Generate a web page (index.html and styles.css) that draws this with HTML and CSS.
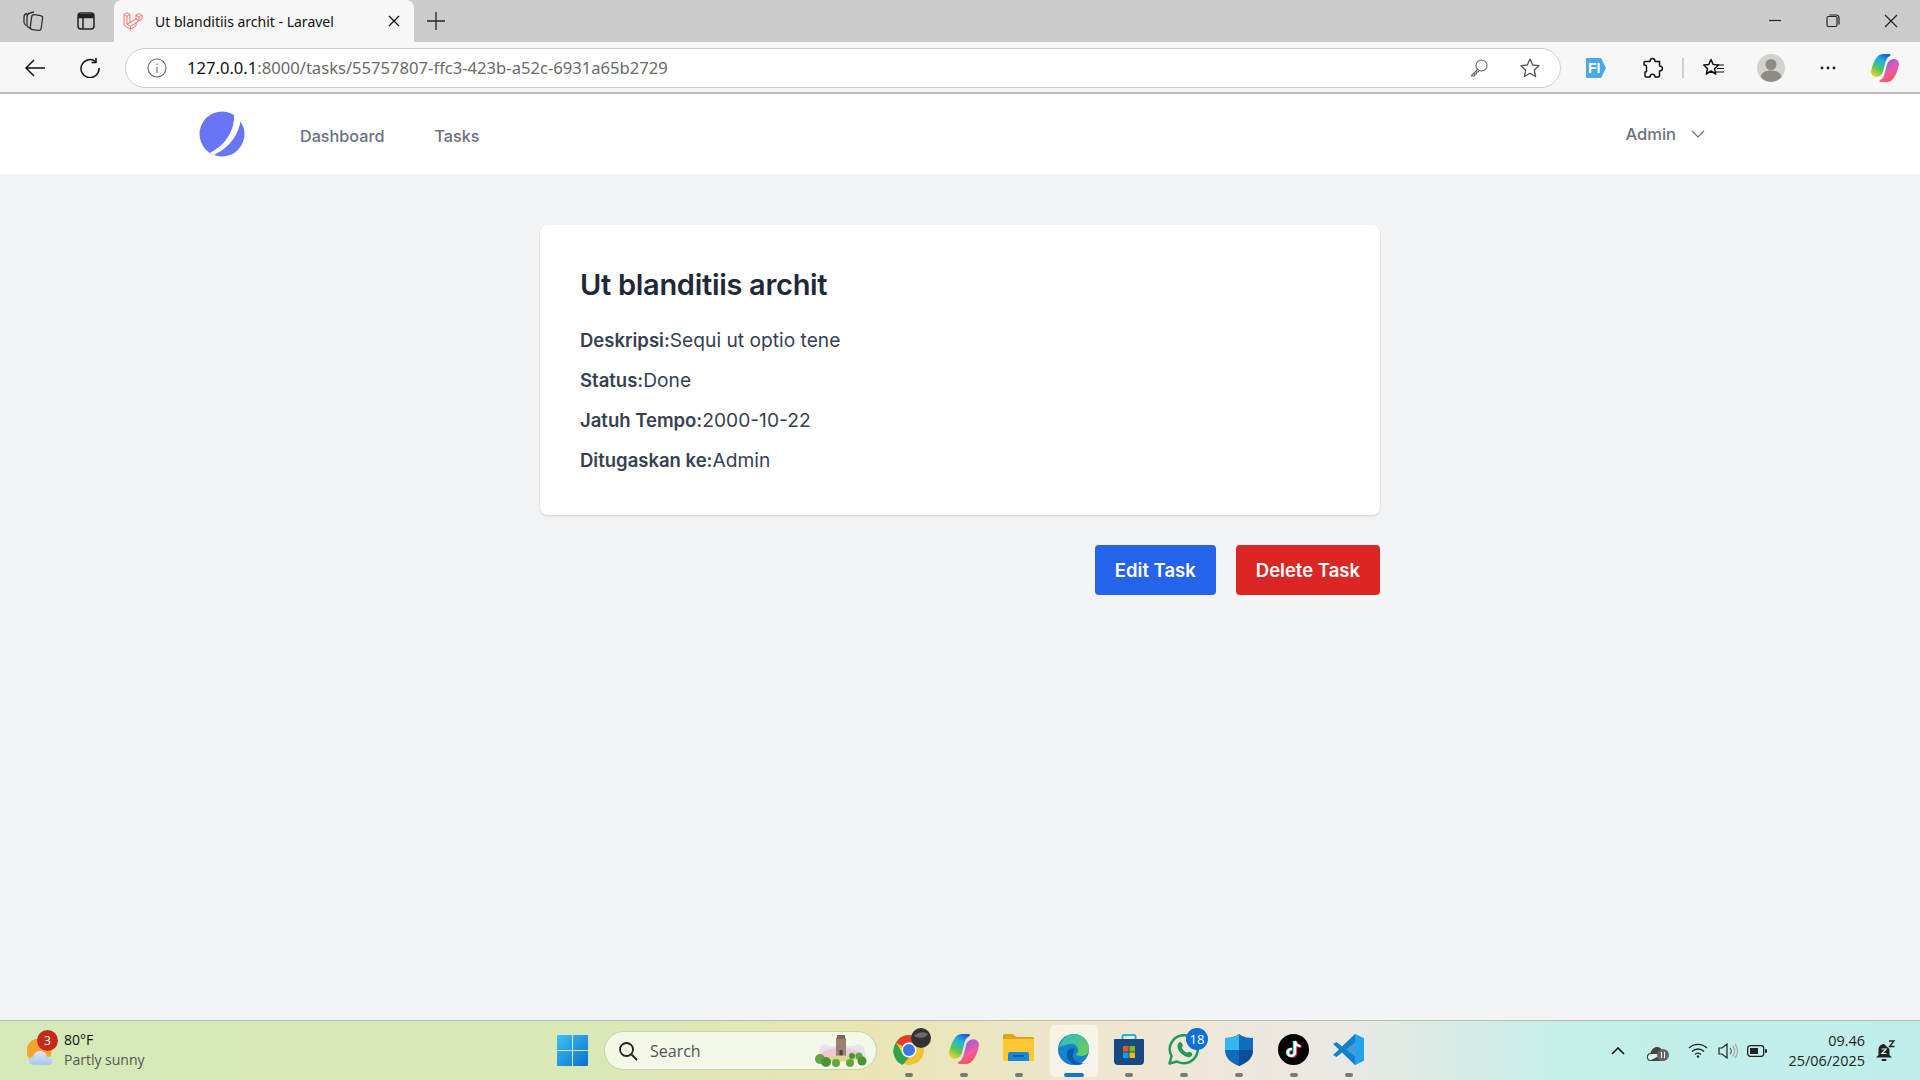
FILE: index.html
```html
<!DOCTYPE html>
<html lang="en">

<head>
    <meta charset="UTF-8">
    <meta name="viewport" content="width=device-width, initial-scale=1.0">
    <title>Ut blanditiis archit - Laravel</title>
    <link rel="stylesheet" href="styles.css">
</head>

<body>
    <!-- Browser tab strip -->
    <div class="tabstrip">
        <div class="strip-btn first">
            <svg width="22" height="22" viewBox="0 0 22 22" fill="none" stroke="#333" stroke-width="1.3"><rect x="9" y="5" width="11" height="15" rx="2.5" transform="rotate(8 14 12)"/><path d="M8 18c-2-.5-3-1.500-3-3V7c0-2 1-3.500 3-4l4-1"/><path d="M4 15.500C2.500 14.500 2 13.500 2 12V7c0-2 1-3 3-3.500"/></svg>
        </div>
        <div class="strip-btn">
            <svg width="20" height="20" viewBox="0 0 20 20" fill="none" stroke="#222" stroke-width="1.500"><rect x="2" y="2" width="16" height="16" rx="3"/><path d="M2 6.500h16M7 6.500V18"/><path d="M3 3h14v3H3z" fill="#222" stroke="none"/></svg>
        </div>
        <div class="tab">
            <svg class="favicon" width="20" height="20" viewBox="0 0 20 20" fill="none" stroke="#f8685f" stroke-width=".9" stroke-linejoin="round"><path d="M1 3.500 4 1.700 7 3.500V11.500L13 8V4.200L16 2.500 19 4.200V8L13 11.500V15L7.500 18.200 1 14.500ZM1 3.500 4 5.300 7 3.500M4 5.300V13.200L7.500 15.200 13 12M4 13.200 7 11.500M13 4.200 16 6 19 4.200M16 6V9.700M7.500 15.200V18.200M13 8 16 9.700"/></svg>
            <span class="tab-title">Ut blanditiis archit - Laravel</span>
            <svg class="tab-close" width="12" height="12" viewBox="0 0 12 12" stroke="#111" stroke-width="1.300"><path d="M1 1l10 10M11 1L1 11"/></svg>
        </div>
        <svg class="new-tab" width="18" height="18" viewBox="0 0 18 18" stroke="#222" stroke-width="1.300"><path d="M9 0v18M0 9h18"/></svg>
        <div class="window-controls">
            <svg width="58" height="14" viewBox="0 0 58 14" stroke="#222" stroke-width="1.200"><path d="M23 6.500h12"/></svg>
            <svg width="58" height="14" viewBox="0 0 58 14" fill="none" stroke="#222" stroke-width="1.200"><rect x="23" y="2.500" width="10" height="10" rx="1.500"/><path d="M25.500 1h6.500c2 0 3 1 3 3v6.500"/></svg>
            <svg width="58" height="14" viewBox="0 0 58 14" stroke="#222" stroke-width="1.200"><path d="M23 1l12 12M35 1L23 13"/></svg>
        </div>
    </div>

    <!-- Browser toolbar -->
    <div class="toolbar">
        <svg class="nav-back" width="20" height="18" viewBox="0 0 20 18" fill="none" stroke="#111" stroke-width="1.500"><path d="M20 9H1M9 1L1 9l8 8"/></svg>
        <svg class="nav-reload" width="20" height="20" viewBox="0 0 20 20" fill="none" stroke="#111" stroke-width="1.500"><path d="M15.500 3.500A9 9 0 1 0 19 10"/><path d="M16 0v4.500h-4.500"/></svg>
        <div class="omnibox">
            <svg class="info-icon" width="20" height="20" viewBox="0 0 20 20" fill="none" stroke="#666" stroke-width="1.100"><circle cx="10" cy="10" r="9"/><path d="M10 9v6M10 5.500v1.500"/></svg>
            <span class="url"><span class="url-host">127.0.0.1</span>:8000/tasks/55757807-ffc3-423b-a52c-6931a65b2729</span>
            <svg class="omni-key" width="18" height="18" viewBox="0 0 18 18" fill="none" stroke="#666" stroke-width="1.100"><circle cx="11.500" cy="6.500" r="5.500"/><path d="M7.500 10.500L1.500 16.500v0.500h3v-2h2v-2h1.500l1-1"/></svg>
            <svg class="omni-star" width="22" height="22" viewBox="0 0 22 22" fill="none" stroke="#555" stroke-width="1.300" stroke-linejoin="round"><path d="M11 2l2.700 6 6.300.700-4.700 4.300 1.300 6.500-5.600-3.300-5.600 3.300 1.300-6.500L2 8.700 8.300 8z"/></svg>
        </div>
        <div class="tool-btn">
            <svg width="22" height="22" viewBox="0 0 22 22"><path d="M2 1h14l5 10-5 10H2a1 1 0 0 1-1-1V2a1 1 0 0 1 1-1z" fill="#4aa8e8"/><text x="3" y="16" class="fi-text">FI</text></svg>
        </div>
        <div class="tool-btn">
            <svg width="20" height="22" viewBox="0 0 20 22" fill="none" stroke="#111" stroke-width="1.500" stroke-linejoin="round"><path d="M7 4.500C7 2.500 8 1.500 9.500 1.500S12 2.500 12 4.500h4.500V9c2 0 3 1 3 2.500S18.500 14 16.500 14v4.500q0 1-1 1.500H12c0-2-1-2.800-2.500-2.800S7 18 7 20H3a1.500 1.500 0 0 1-1-1.500V15c2 0 1.500 0 1.500-3.500S3.500 8 1 8V5.500c0-.5.500-1 1-1z"/></svg>
        </div>
        <div class="tool-divider"></div>
        <div class="tool-btn">
            <svg width="22" height="20" viewBox="0 0 22 20" fill="none" stroke="#111" stroke-width="1.500" stroke-linejoin="round"><path d="M8 1.500l2.200 5 5.300.5-4 3.700 1.200 5.300L8 13l-4.700 3 1.200-5.300L.8 7l5-.5z"/><path d="M15 7h6M14 10.500h7M13 14h8" stroke-width="1.200"/></svg>
        </div>
        <div class="tool-btn">
            <svg width="28" height="28" viewBox="0 0 28 28"><circle cx="14" cy="14" r="14" fill="#d3d1cd"/><circle cx="14" cy="10.500" r="5.500" fill="#8e8b87"/><path d="M3.500 23c1-4.500 5-6.500 10.500-6.500s9.500 2 10.500 6.500a14 14 0 0 1-21 0z" fill="#8e8b87"/></svg>
        </div>
        <div class="tool-btn">
            <svg width="16" height="4" viewBox="0 0 16 4" fill="#222"><circle cx="2" cy="2" r="1.400"/><circle cx="8" cy="2" r="1.400"/><circle cx="14" cy="2" r="1.400"/></svg>
        </div>
        <div class="tool-btn">
            <svg width="28" height="28" viewBox="0 0 28 28">
                <defs>
                    <linearGradient id="copA" x1=".7" y1="0" x2=".2" y2="1"><stop offset="0" stop-color="#1a5fd8"/><stop offset=".3" stop-color="#1fb2e0"/><stop offset=".65" stop-color="#55c85a"/><stop offset="1" stop-color="#f2d02e"/></linearGradient>
                    <linearGradient id="copB" x1=".3" y1="0" x2=".8" y2="1"><stop offset="0" stop-color="#f0572e"/><stop offset=".4" stop-color="#f05aa8"/><stop offset="1" stop-color="#8a5ce8"/></linearGradient>
                </defs>
                <path d="M12 0h6c2 0 2 1 1 2-3 1-4 4-5 8l-2 8c-1 3-4 5-7 5-3 0-5-3-5-5C1 11 4 5 7 2c1-1 3-2 5-2z" fill="url(#copA)"/>
                <path d="M12 0h6c2 0 2 1 1 2-3 1-4 4-5 8l-2 8c-1 3-4 5-7 5-3 0-5-3-5-5C1 11 4 5 7 2c1-1 3-2 5-2z" fill="url(#copB)" transform="rotate(180 14 14)"/>
            </svg>
        </div>
    </div>

    <!-- Laravel page -->
    <nav class="app-nav">
        <svg class="app-logo" width="46" height="46" viewBox="0 0 46 46"><circle cx="23" cy="23" r="22.500" fill="#6875f5"/><path d="M35 3C36 18 28 33 11 42L15 44C32 37 41 26 44 13L41 2z" fill="#fff"/><path d="M41.500 10.500C39 24 31 36 16 43.500 27 47 39 41 43.500 30 46 23 45 16 41.500 10.500z" fill="#6875f5"/></svg>
        <a class="nav-link link-dashboard">Dashboard</a>
        <a class="nav-link">Tasks</a>
        <div class="nav-user">
            <span>Admin</span>
            <svg width="14" height="8" viewBox="0 0 14 8" fill="none" stroke="#6b7280" stroke-width="1.200"><path d="M1 1l6 6 6-6"/></svg>
        </div>
    </nav>

    <main class="content">
        <section class="task-card">
            <h1>Ut blanditiis archit</h1>
            <p><strong>Deskripsi:</strong>Sequi ut optio tene</p>
            <p><strong>Status:</strong>Done</p>
            <p><strong>Jatuh Tempo:</strong>2000-10-22</p>
            <p><strong>Ditugaskan ke:</strong>Admin</p>
        </section>
        <div class="task-actions">
            <a class="btn btn-edit">Edit Task</a>
            <a class="btn btn-delete">Delete Task</a>
        </div>
    </main>

    <!-- Windows taskbar -->
    <footer class="taskbar">
        <div class="weather">
            <svg width="30" height="30" viewBox="0 0 30 30">
                <defs><linearGradient id="cloudG" x1="0" y1="0" x2="0" y2="1"><stop offset="0" stop-color="#d8e6f8"/><stop offset="1" stop-color="#a9c6ee"/></linearGradient></defs>
                <circle cx="12" cy="15" r="12.500" fill="#f4a32c"/>
                <path d="M7 29c-3 0-5-2-5-4.500S4 20.500 6 20.500C7 17 10 15 13 15c4 0 6.500 2.500 7 5.500 3 0 5.500 2 5.500 4.500S23 29 20 29z" fill="url(#cloudG)"/>
            </svg>
            <span class="weather-badge">3</span>
            <div class="weather-text">
                <span class="temp">80°F</span>
                <span class="sky">Partly sunny</span>
            </div>
        </div>
        <svg class="start" width="31" height="31" viewBox="0 0 31 31"><defs><linearGradient id="win" x1="0" y1="0" x2="1" y2="1"><stop offset="0" stop-color="#3ec2f5"/><stop offset="1" stop-color="#0a6fd0"/></linearGradient></defs><path d="M0 1a1 1 0 0 1 1-1h14v15H0zM16 0h14a1 1 0 0 1 1 1v14H16zM0 16h15v15H1a1 1 0 0 1-1-1zM16 16h15v14a1 1 0 0 1-1 1H16z" fill="url(#win)"/></svg>
        <div class="searchbox">
            <svg width="20" height="20" viewBox="0 0 20 20" fill="none" stroke="#222" stroke-width="1.800"><circle cx="8.500" cy="8.500" r="6.500"/><path d="M13.500 13.500L19 19"/></svg>
            <span>Search</span>
            <svg class="search-art" width="58" height="32" viewBox="0 0 58 32">
                <path d="M8 12c2-3 6-3 8-1h26c3-3 8-2 10 1l2 10H6z" fill="#e6e4f0"/>
                <path d="M6 24c3-8 10-11 22-11s22 3 25 11z" fill="#f0c8d4"/>
                <rect x="24" y="3" width="10" height="19" fill="#9a7f72"/>
                <rect x="25" y="0" width="8" height="4" fill="#7d655a"/>
                <rect x="27.500" y="15" width="3" height="7" fill="#4f3f38"/>
                <path d="M10 24c6-4 30-5 38 0-6 3-32 4-38 0z" fill="#dcd98c"/>
                <circle cx="8" cy="24" r="5" fill="#5fa743"/><circle cx="14" cy="27" r="5" fill="#4a9438"/><circle cx="24" cy="28" r="4" fill="#5fa743"/>
                <circle cx="40" cy="21" r="3" fill="#4a9438"/><circle cx="47" cy="21" r="3.500" fill="#5fa743"/><circle cx="38" cy="28" r="4" fill="#5fa743"/><circle cx="50" cy="26" r="4.500" fill="#4a9438"/>
            </svg>
        </div>
        <div class="dock">
            <div class="dock-item">
                <svg width="32" height="32" viewBox="0 0 32 32"><circle cx="16" cy="16" r="15" fill="#f1c232"/><path d="M16 1a15 15 0 0 1 13 7.500H16a7.500 7.500 0 0 0-6.500 3.800L3 8.500A15 15 0 0 1 16 1z" fill="#e33b2e"/><path d="M3 8.500l6.500 11.300a7.500 7.500 0 0 0 6.500 3.700L9.500 31A15 15 0 0 1 3 8.500z" fill="#2ea44f"/><circle cx="16" cy="16" r="7.500" fill="#fff"/><circle cx="16" cy="16" r="6" fill="#3b78e7"/></svg>
                <svg class="dock-avatar" width="20" height="20" viewBox="0 0 20 20"><circle cx="10" cy="10" r="10" fill="#333"/><path d="M3 8c4-4 10-5 14-2-2 4-8 5-14 2z" fill="#6b6b6b"/></svg>
                <i class="dock-dot"></i>
            </div>
            <div class="dock-item">
                <svg width="30" height="30" viewBox="0 0 28 28"><path d="M12 0h6c2 0 2 1 1 2-3 1-4 4-5 8l-2 8c-1 3-4 5-7 5-3 0-5-3-5-5C1 11 4 5 7 2c1-1 3-2 5-2z" fill="url(#copA)"/><path d="M12 0h6c2 0 2 1 1 2-3 1-4 4-5 8l-2 8c-1 3-4 5-7 5-3 0-5-3-5-5C1 11 4 5 7 2c1-1 3-2 5-2z" fill="url(#copB)" transform="rotate(180 14 14)"/></svg>
                <i class="dock-dot"></i>
            </div>
            <div class="dock-item">
                <svg width="31" height="27" viewBox="0 0 31 27"><path d="M0 2a2 2 0 0 1 2-2h8l3 3h17a1 1 0 0 1 1 1v3H0z" fill="#e0a31a"/><path d="M0 5h31v21a1 1 0 0 1-1 1H1a1 1 0 0 1-1-1z" fill="#fdc933"/><path d="M5 27v-7a2 2 0 0 1 2-2h17a2 2 0 0 1 2 2v7z" fill="#1a86d8"/><path d="M10 22h11" stroke="#0c4f8f" stroke-width="1.500"/></svg>
                <i class="dock-dot"></i>
            </div>
            <div class="dock-item dock-active">
                <svg width="31" height="31" viewBox="0 0 31 31"><defs><linearGradient id="edgeG" x1="0" y1="0" x2="1" y2="1"><stop offset="0" stop-color="#2fb5c9"/><stop offset="1" stop-color="#6fd24e"/></linearGradient></defs><circle cx="15.500" cy="15.500" r="15.500" fill="#1382cf"/><path d="M1 14C3 5 9 0 16 0c9 0 15 7 15 15 0 5-4 7-8 7-3 0-5-1-5-2 2-1 3-3 2-5-1-4-5-6-9-5-5 1-9 3-10 4z" fill="url(#edgeG)"/><path d="M17 15c-4-2-8 0-8 6 0 5 5 10 11 10 2 0 4-1 6-2-5 1-10-2-11-6-.5-3 1-6 2-8z" fill="#0c5aa6"/></svg>
                <i class="dock-dot"></i>
            </div>
            <div class="dock-item">
                <svg width="30" height="31" viewBox="0 0 30 31"><path d="M8.500 5V2a1.500 1.500 0 0 1 1.500-1h10a1.500 1.500 0 0 1 1.500 1v3" fill="none" stroke="#2aa9e0" stroke-width="2"/><path d="M0 6a1 1 0 0 1 1-1h28a1 1 0 0 1 1 1v21a4 4 0 0 1-4 4H4a4 4 0 0 1-4-4z" fill="#174a82"/><rect x="9" y="12" width="5.500" height="5.500" fill="#f25022"/><rect x="15.500" y="12" width="5.500" height="5.500" fill="#7fba00"/><rect x="9" y="18.500" width="5.500" height="5.500" fill="#00a4ef"/><rect x="15.500" y="18.500" width="5.500" height="5.500" fill="#ffb900"/></svg>
                <i class="dock-dot"></i>
            </div>
            <div class="dock-item">
                <svg width="31" height="31" viewBox="0 0 31 31" fill="none"><path d="M1.500 29.500l2-7.500A14 14 0 1 1 9 27.500z" stroke="#1f9a5a" stroke-width="2.500" stroke-linejoin="round"/><path d="M10.500 9c2-2 3-1 4 1.500 1 2-1 2.500-.5 3.500 1 2 2.500 3.500 4.500 4.500 1 .5 1.500-1.500 3.500-.5 2.500 1 3 2.500 1.500 4-2 2-5 1.500-9-1.500s-6.500-8-4-11.500z" fill="#1f9a5a"/></svg>
                <span class="dock-badge">18</span>
                <i class="dock-dot"></i>
            </div>
            <div class="dock-item">
                <svg width="28" height="32" viewBox="0 0 28 32"><path d="M14 0c4 3 9 4 14 4v12c0 8-6 13-14 16C6 29 0 24 0 16V4c5 0 10-1 14-4z" fill="#0f6cbd"/><path d="M14 0v16H0V4c5 0 10-1 14-4z" fill="#36b6ee"/><path d="M14 16h14c0 8-6 13-14 16z" fill="#0b4f96"/></svg>
                <i class="dock-dot"></i>
            </div>
            <div class="dock-item">
                <svg width="31" height="31" viewBox="0 0 31 31" fill="none"><circle cx="15.500" cy="15.500" r="15.500" fill="#000"/><path d="M17 7v11.500a3.500 3.500 0 1 1-3-3.500" stroke="#25f4ee" stroke-width="2.500" transform="translate(-1 0)"/><path d="M17 7c.5 3 2.500 5 5.500 5" stroke="#25f4ee" stroke-width="2.500" transform="translate(-1 0)"/><path d="M17 7v11.500a3.500 3.500 0 1 1-3-3.500" stroke="#fe2c55" stroke-width="2.500" transform="translate(1 0.500)"/><path d="M17 7c.5 3 2.500 5 5.500 5" stroke="#fe2c55" stroke-width="2.500" transform="translate(1 0.500)"/><path d="M17 7v11.500a3.500 3.500 0 1 1-3-3.500M17 7c.5 3 2.500 5 5.500 5" stroke="#fff" stroke-width="2.300"/></svg>
                <i class="dock-dot"></i>
            </div>
            <div class="dock-item">
                <svg width="31" height="31" viewBox="0 0 31 31"><path d="M22 0l9 4.500v22L22 31 9 18.500 3.500 23 0 21l6-5.500L0 10l3.500-2L9 12.500z" fill="#0f7fd0"/><path d="M22 8.500L13 15.500l9 7z" fill="#e8f3ec" opacity=".25"/><path d="M22 0l9 4.500v22L22 31z" fill="#25a4ec"/></svg>
                <i class="dock-dot"></i>
            </div>
        </div>
        <div class="tray">
            <svg class="tray-chevron" width="14" height="8" viewBox="0 0 14 8" fill="none" stroke="#111" stroke-width="1.600"><path d="M1 7l6-6 6 6"/></svg>
            <div class="tray-cloud">
                <svg width="20" height="14" viewBox="0 0 20 14"><path d="M4 14a4 4 0 0 1-.5-8C4.500 2.500 7 0 10 0c3 0 5.500 2 6 5a4.500 4.500 0 0 1-.5 9z" fill="#444"/><path d="M4 13a3 3 0 0 1 0-6h12" fill="#ddf3ee"/></svg>
                <span class="pause-dot"><i></i><i></i></span>
            </div>
            <svg class="tray-wifi" width="20" height="15" viewBox="0 0 20 15" fill="none" stroke="#222" stroke-width="1.300"><path d="M1 5a13 13 0 0 1 18 0M4 8.500a8.500 8.500 0 0 1 12 0M7 11.500a4 4 0 0 1 6 0"/><circle cx="10" cy="13.500" r="1.200" fill="#222" stroke="none"/></svg>
            <svg class="tray-volume" width="20" height="16" viewBox="0 0 20 16" fill="none" stroke="#222" stroke-width="1.200"><path d="M1 5v6h3l5 4V1L4 5z"/><path d="M12 5a4 4 0 0 1 0 6" stroke="#666"/><path d="M14.500 2.500a8 8 0 0 1 0 11M17 1a11 11 0 0 1 0 14" stroke="#aaa"/></svg>
            <svg class="tray-battery" width="20" height="12" viewBox="0 0 20 12"><rect x=".7" y=".7" width="16" height="10.600" rx="2.500" fill="none" stroke="#222" stroke-width="1.300"/><rect x="3" y="3" width="8" height="6" fill="#222"/><rect x="18" y="4" width="2" height="4" rx="1" fill="#222"/></svg>
            <div class="clock">
                <span>09.46</span>
                <span>25/06/2025</span>
            </div>
            <svg class="tray-bell" width="20" height="22" viewBox="0 0 20 22"><path d="M8 4C4 4.500 2.500 7 2.500 10v5L0 17.500h16L13.500 15V9" fill="#222"/><rect x="5.500" y="19" width="5" height="2" rx="1" fill="#222"/><path d="M5.500 9h4.500l-4 4.500h4.500" fill="none" stroke="#ddf3ee" stroke-width="1.200"/><path d="M13 1h5l-4.500 5.500h5" fill="none" stroke="#222" stroke-width="1.300"/></svg>
        </div>
    </footer>
</body>

</html>
```

FILE: styles.css
```css
* {
    box-sizing: border-box;
}

body {
    margin: 0;
    height: 100vh;
    display: flex;
    flex-direction: column;
    overflow: hidden;
    background-color: #f3f4f6;
    font-family: "Open Sans", "Noto Sans", sans-serif;
}

/* Tab strip */
.tabstrip {
    height: 42px;
    flex-shrink: 0;
    display: flex;
    align-items: center;
    background-color: #cccccc;
}

.strip-btn {
    width: 53px;
    display: flex;
    justify-content: center;
}

.strip-btn.first {
    margin-left: 6px;
}

.tab {
    width: 300px;
    height: 42px;
    margin-left: 2px;
    padding: 0 14px 0 9px;
    display: flex;
    align-items: center;
    background-color: #f7f7f7;
    border-radius: 8px 8px 0 0;
}

.tab-title {
    flex: 1;
    margin-left: 12px;
    font-size: 14px;
    color: #111;
    font-family: "Noto Sans", sans-serif;
}

.new-tab {
    margin-left: 13px;
}

.window-controls {
    margin-left: auto;
    display: flex;
}

/* Toolbar */
.toolbar {
    height: 52px;
    flex-shrink: 0;
    display: flex;
    align-items: center;
    padding-top: 1px;
    padding-right: 6px;
    background-color: #f7f7f7;
    border-bottom: 2px solid #bdbdbd;
}

.nav-back {
    margin-left: 25px;
}

.nav-reload {
    margin-left: 35px;
}

.omnibox {
    width: 1436px;
    height: 40px;
    margin-left: 25px;
    margin-right: 6px;
    padding: 0 19px 0 21px;
    display: flex;
    align-items: center;
    background-color: #fff;
    border: 1px solid #cfcfcf;
    border-radius: 20px;
}

.url {
    flex: 1;
    margin-left: 20px;
    font-size: 16.6px;
    color: #6a6a6a;
    font-family: "Noto Sans", sans-serif;
}

.url-host {
    color: #111;
}

.omni-key {
    margin-right: 31px;
}

.tool-btn {
    width: 57px;
    display: flex;
    justify-content: center;
    align-items: center;
}

.fi-text {
    font-family: "Liberation Sans", sans-serif;
    font-size: 14px;
    font-weight: 700;
    fill: #fff;
}

.tool-divider {
    width: 2px;
    height: 20px;
    margin: 0 1px;
    background-color: #cfcfcf;
}

/* App nav */
.app-nav {
    height: 80px;
    flex-shrink: 0;
    display: flex;
    align-items: center;
    padding-left: 199px;
    padding-right: 215px;
    background-color: #fff;
    font-family: Inter, sans-serif;
}

.app-logo {
    margin-top: -1px;
}

.nav-link {
    margin-left: 50px;
    font-size: 16.2px;
    font-weight: 500;
    color: #6b7280;
    padding-top: 4px;
}

.link-dashboard {
    margin-left: 55px;
}

.nav-user {
    margin-left: auto;
    display: flex;
    align-items: center;
    gap: 15px;
    font-size: 16.500px;
    font-weight: 500;
    color: #6b7280;
}

/* Task detail */
.content {
    flex: 1;
    width: 840px;
    margin: 0 auto;
    padding-top: 51px;
    font-family: Inter, sans-serif;
}

.task-card {
    height: 290px;
    padding: 42px 40px 40px;
    background-color: #fff;
    border-radius: 8px;
    box-shadow: 0 1px 3px rgba(0, 0, 0, 0.1), 0 1px 2px rgba(0, 0, 0, 0.06);
}

.task-card h1 {
    margin: 0 0 23px;
    font-size: 29px;
    line-height: 36px;
    font-weight: 600;
    letter-spacing: -0.3px;
    color: #1f2937;
}

.task-card p {
    height: 28px;
    margin: 0 0 12px;
    font-size: 19.2px;
    line-height: 28px;
    color: #374151;
}

.task-card strong {
    font-size: 18.500px;
    font-weight: 600;
}

.task-actions {
    margin-top: 30px;
    display: flex;
    justify-content: flex-end;
    gap: 20px;
}

.btn {
    height: 50px;
    padding: 0 20px;
    display: flex;
    align-items: center;
    border-radius: 4px;
    font-size: 18.500px;
    font-weight: 600;
    color: #fff;
}

.btn-edit {
    background-color: #2563eb;
}

.btn-delete {
    background-color: #dc2626;
}

/* Taskbar */
.taskbar {
    height: 60px;
    flex-shrink: 0;
    display: flex;
    align-items: center;
    background: linear-gradient(90deg, #d6e9b8 0%, #d9e8b6 30%, #e8e6b4 45%, #f0e6d6 60%, #eae9e4 70%, #c4efe9 82%, #bfeeea 100%);
    border-top: 1px solid #b5c0a8;
}

.weather {
    width: 557px;
    padding-left: 27px;
    display: flex;
    align-items: center;
    position: relative;
}

.weather-badge {
    position: absolute;
    left: 37px;
    top: -2px;
    width: 21px;
    height: 21px;
    display: flex;
    align-items: center;
    justify-content: center;
    border-radius: 50%;
    background-color: #c42b1c;
    color: #fff;
    font-size: 12px;
}

.weather-text {
    margin-left: 7px;
    margin-top: -2px;
    display: flex;
    flex-direction: column;
    font-size: 14px;
    line-height: 20px;
}

.temp {
    color: #111;
}

.sky {
    color: #555;
}

.start {
    flex-shrink: 0;
}

.searchbox {
    width: 273px;
    height: 39px;
    margin-left: 16px;
    padding: 0 6px 0 13px;
    display: flex;
    align-items: center;
    background-color: #f4f8e6;
    border: 1px solid #c9d0b0;
    border-radius: 20px;
    color: #555;
    font-size: 16px;
}

.searchbox span {
    flex: 1;
    margin-left: 12px;
}

.dock {
    margin-left: 4px;
    display: flex;
}

.dock-item {
    width: 55px;
    height: 52px;
    padding-top: 9px;
    display: flex;
    justify-content: center;
    align-items: flex-start;
    position: relative;
    border-radius: 5px;
}

.dock-active {
    width: 48px;
    margin: 0 3.5px;
    background-color: rgba(255, 255, 255, 0.55);
}

.dock-dot {
    position: absolute;
    left: 50%;
    bottom: 0;
    width: 8px;
    height: 4px;
    margin-left: -4px;
    border-radius: 2px;
    background-color: #7a7a72;
}

.dock-active .dock-dot {
    width: 20px;
    margin-left: -10px;
    background-color: #0f78d4;
}

.dock-avatar {
    position: absolute;
    top: 3px;
    left: 30px;
}

.dock-badge {
    position: absolute;
    top: 3px;
    left: 30px;
    width: 22px;
    height: 22px;
    display: flex;
    align-items: center;
    justify-content: center;
    border-radius: 50%;
    background-color: #0f6fd6;
    color: #fff;
    font-size: 13px;
}

.tray {
    flex: 1;
    display: flex;
    align-items: center;
    padding-left: 235px;
}

.tray-cloud {
    position: relative;
    width: 20px;
    height: 14px;
    margin-left: 22px;
}

.pause-dot {
    position: absolute;
    left: 10px;
    top: 5px;
    width: 12px;
    height: 12px;
    display: flex;
    align-items: center;
    justify-content: center;
    gap: 2px;
    border-radius: 50%;
    background-color: #666;
}

.pause-dot i {
    width: 1px;
    height: 6px;
    background-color: #fff;
}

.tray-wifi {
    margin-left: 21px;
}

.tray-volume {
    margin-left: 10px;
}

.tray-battery {
    margin-left: 9px;
}

.clock {
    width: 98px;
    display: flex;
    flex-direction: column;
    align-items: flex-end;
    font-size: 14.400px;
    line-height: 20px;
    color: #222;
}

.tray-bell {
    margin-left: 11px;
}
```
